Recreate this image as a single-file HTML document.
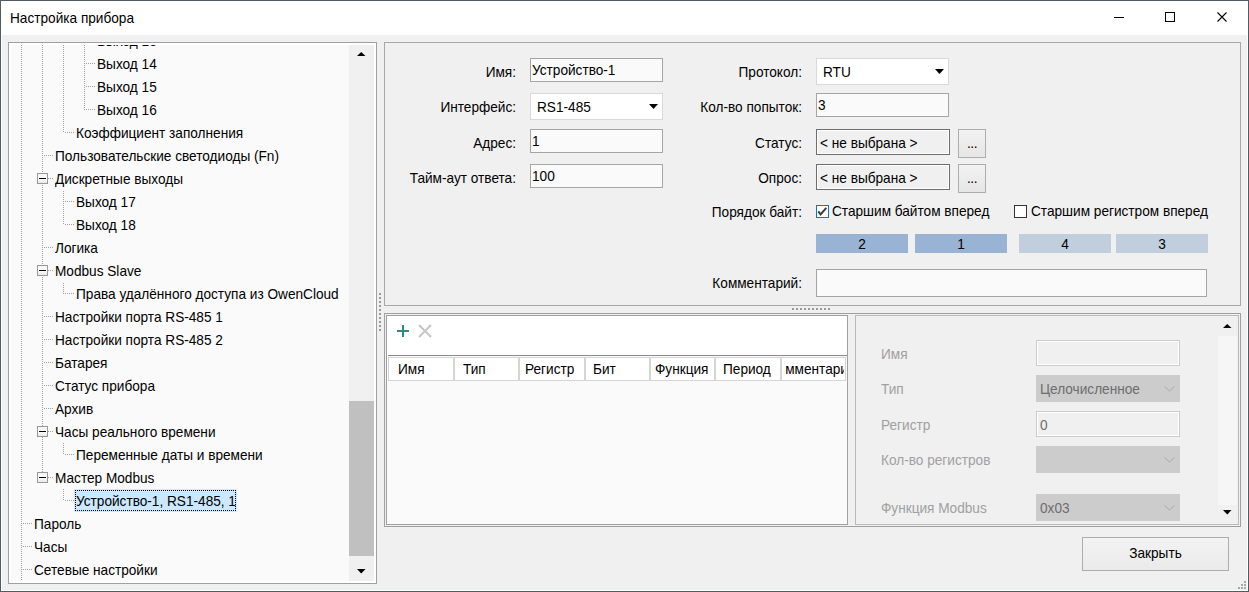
<!DOCTYPE html>
<html><head><meta charset="utf-8"><style>
html,body{margin:0;padding:0;width:1249px;height:592px;overflow:hidden;background:#f0f0f0}
body div{position:absolute}
.t{transform:scaleX(0.94);font-family:"Liberation Sans",sans-serif;font-size:14.5px;line-height:16px;white-space:nowrap;color:#000}
</style></head><body>
<div style="left:0px;top:0px;width:1249px;height:592px;background:#525a64"></div>
<div style="left:1px;top:1px;width:1247px;height:590px;background:#ffffff"></div>
<div style="left:2px;top:35px;width:1245px;height:555px;background:#f0f0f0"></div>
<div class="t" style="left:10px;top:10px;color:#000;font-size:14.5px;transform-origin:0 0;">Настройка прибора</div>
<div style="left:1114px;top:17px;width:10px;height:1px;background:#000"></div>
<div style="left:1165px;top:12px;width:10px;height:10px;box-sizing:border-box;border:1px solid #000;background:transparent;"></div>
<svg style="position:absolute;left:1216px;top:11px" width="13" height="13"><path d="M1.5 1.5 L10.5 10.5 M10.5 1.5 L1.5 10.5" stroke="#000" stroke-width="1.1"/></svg>
<div style="left:8px;top:42px;width:369px;height:542px;box-sizing:border-box;border:1px solid #a0a0a0;background:#ffffff;"></div>
<div style="left:11px;top:45px;width:338px;height:536px;background:#fafafa"></div>
<div style="left:11px;top:45px;width:338px;height:536px;overflow:hidden">
<div style="left:10px;top:-16px;width:1px;height:552px;background:repeating-linear-gradient(to bottom,#a0a0a0 0 1px,transparent 1px 2px)"></div>
<div style="left:31px;top:-16px;width:1px;height:449px;background:repeating-linear-gradient(to bottom,#a0a0a0 0 1px,transparent 1px 2px)"></div>
<div style="left:73px;top:-16px;width:1px;height:81px;background:repeating-linear-gradient(to bottom,#a0a0a0 0 1px,transparent 1px 2px)"></div>
<div style="left:52px;top:-16px;width:1px;height:104px;background:repeating-linear-gradient(to bottom,#a0a0a0 0 1px,transparent 1px 2px)"></div>
<div style="left:52px;top:146px;width:1px;height:34px;background:repeating-linear-gradient(to bottom,#a0a0a0 0 1px,transparent 1px 2px)"></div>
<div style="left:52px;top:238px;width:1px;height:11px;background:repeating-linear-gradient(to bottom,#a0a0a0 0 1px,transparent 1px 2px)"></div>
<div style="left:52px;top:398px;width:1px;height:12px;background:repeating-linear-gradient(to bottom,#a0a0a0 0 1px,transparent 1px 2px)"></div>
<div style="left:52px;top:444px;width:1px;height:12px;background:repeating-linear-gradient(to bottom,#a0a0a0 0 1px,transparent 1px 2px)"></div>
<div style="left:75px;top:-5px;width:10px;height:1px;background:repeating-linear-gradient(to right,#a0a0a0 0 1px,transparent 1px 2px)"></div>
<div class="t" style="left:86px;top:-12px;color:#000;font-size:14.5px;transform-origin:0 0;">Выход 13</div>
<div style="left:75px;top:18px;width:10px;height:1px;background:repeating-linear-gradient(to right,#a0a0a0 0 1px,transparent 1px 2px)"></div>
<div class="t" style="left:86px;top:11px;color:#000;font-size:14.5px;transform-origin:0 0;">Выход 14</div>
<div style="left:75px;top:41px;width:10px;height:1px;background:repeating-linear-gradient(to right,#a0a0a0 0 1px,transparent 1px 2px)"></div>
<div class="t" style="left:86px;top:34px;color:#000;font-size:14.5px;transform-origin:0 0;">Выход 15</div>
<div style="left:75px;top:64px;width:10px;height:1px;background:repeating-linear-gradient(to right,#a0a0a0 0 1px,transparent 1px 2px)"></div>
<div class="t" style="left:86px;top:57px;color:#000;font-size:14.5px;transform-origin:0 0;">Выход 16</div>
<div style="left:54px;top:87px;width:10px;height:1px;background:repeating-linear-gradient(to right,#a0a0a0 0 1px,transparent 1px 2px)"></div>
<div class="t" style="left:65px;top:80px;color:#000;font-size:14.5px;transform-origin:0 0;">Коэффициент заполнения</div>
<div style="left:33px;top:110px;width:10px;height:1px;background:repeating-linear-gradient(to right,#a0a0a0 0 1px,transparent 1px 2px)"></div>
<div class="t" style="left:44px;top:103px;color:#000;font-size:14.5px;transform-origin:0 0;">Пользовательские светодиоды (Fn)</div>
<div style="left:33px;top:133px;width:10px;height:1px;background:repeating-linear-gradient(to right,#a0a0a0 0 1px,transparent 1px 2px)"></div>
<div style="left:26px;top:128px;width:11px;height:11px;box-sizing:border-box;border:1px solid #999999;background:linear-gradient(#f4f4f4,#ffffff 50%,#e8e8e8);"></div>
<div style="left:28px;top:133px;width:7px;height:1px;background:#000"></div>
<div class="t" style="left:44px;top:126px;color:#000;font-size:14.5px;transform-origin:0 0;">Дискретные выходы</div>
<div style="left:54px;top:156px;width:10px;height:1px;background:repeating-linear-gradient(to right,#a0a0a0 0 1px,transparent 1px 2px)"></div>
<div class="t" style="left:65px;top:149px;color:#000;font-size:14.5px;transform-origin:0 0;">Выход 17</div>
<div style="left:54px;top:179px;width:10px;height:1px;background:repeating-linear-gradient(to right,#a0a0a0 0 1px,transparent 1px 2px)"></div>
<div class="t" style="left:65px;top:172px;color:#000;font-size:14.5px;transform-origin:0 0;">Выход 18</div>
<div style="left:33px;top:202px;width:10px;height:1px;background:repeating-linear-gradient(to right,#a0a0a0 0 1px,transparent 1px 2px)"></div>
<div class="t" style="left:44px;top:195px;color:#000;font-size:14.5px;transform-origin:0 0;">Логика</div>
<div style="left:33px;top:225px;width:10px;height:1px;background:repeating-linear-gradient(to right,#a0a0a0 0 1px,transparent 1px 2px)"></div>
<div style="left:26px;top:220px;width:11px;height:11px;box-sizing:border-box;border:1px solid #999999;background:linear-gradient(#f4f4f4,#ffffff 50%,#e8e8e8);"></div>
<div style="left:28px;top:225px;width:7px;height:1px;background:#000"></div>
<div class="t" style="left:44px;top:218px;color:#000;font-size:14.5px;transform-origin:0 0;">Modbus Slave</div>
<div style="left:54px;top:248px;width:10px;height:1px;background:repeating-linear-gradient(to right,#a0a0a0 0 1px,transparent 1px 2px)"></div>
<div class="t" style="left:65px;top:241px;color:#000;font-size:14.5px;transform-origin:0 0;">Права удалённого доступа из OwenCloud</div>
<div style="left:33px;top:271px;width:10px;height:1px;background:repeating-linear-gradient(to right,#a0a0a0 0 1px,transparent 1px 2px)"></div>
<div class="t" style="left:44px;top:264px;color:#000;font-size:14.5px;transform-origin:0 0;">Настройки порта RS-485 1</div>
<div style="left:33px;top:294px;width:10px;height:1px;background:repeating-linear-gradient(to right,#a0a0a0 0 1px,transparent 1px 2px)"></div>
<div class="t" style="left:44px;top:287px;color:#000;font-size:14.5px;transform-origin:0 0;">Настройки порта RS-485 2</div>
<div style="left:33px;top:317px;width:10px;height:1px;background:repeating-linear-gradient(to right,#a0a0a0 0 1px,transparent 1px 2px)"></div>
<div class="t" style="left:44px;top:310px;color:#000;font-size:14.5px;transform-origin:0 0;">Батарея</div>
<div style="left:33px;top:340px;width:10px;height:1px;background:repeating-linear-gradient(to right,#a0a0a0 0 1px,transparent 1px 2px)"></div>
<div class="t" style="left:44px;top:333px;color:#000;font-size:14.5px;transform-origin:0 0;">Статус прибора</div>
<div style="left:33px;top:363px;width:10px;height:1px;background:repeating-linear-gradient(to right,#a0a0a0 0 1px,transparent 1px 2px)"></div>
<div class="t" style="left:44px;top:356px;color:#000;font-size:14.5px;transform-origin:0 0;">Архив</div>
<div style="left:33px;top:386px;width:10px;height:1px;background:repeating-linear-gradient(to right,#a0a0a0 0 1px,transparent 1px 2px)"></div>
<div style="left:26px;top:381px;width:11px;height:11px;box-sizing:border-box;border:1px solid #999999;background:linear-gradient(#f4f4f4,#ffffff 50%,#e8e8e8);"></div>
<div style="left:28px;top:386px;width:7px;height:1px;background:#000"></div>
<div class="t" style="left:44px;top:379px;color:#000;font-size:14.5px;transform-origin:0 0;">Часы реального времени</div>
<div style="left:54px;top:409px;width:10px;height:1px;background:repeating-linear-gradient(to right,#a0a0a0 0 1px,transparent 1px 2px)"></div>
<div class="t" style="left:65px;top:402px;color:#000;font-size:14.5px;transform-origin:0 0;">Переменные даты и времени</div>
<div style="left:33px;top:432px;width:10px;height:1px;background:repeating-linear-gradient(to right,#a0a0a0 0 1px,transparent 1px 2px)"></div>
<div style="left:26px;top:427px;width:11px;height:11px;box-sizing:border-box;border:1px solid #999999;background:linear-gradient(#f4f4f4,#ffffff 50%,#e8e8e8);"></div>
<div style="left:28px;top:432px;width:7px;height:1px;background:#000"></div>
<div class="t" style="left:44px;top:425px;color:#000;font-size:14.5px;transform-origin:0 0;">Мастер Modbus</div>
<div style="left:54px;top:455px;width:10px;height:1px;background:repeating-linear-gradient(to right,#a0a0a0 0 1px,transparent 1px 2px)"></div>
<div style="left:63px;top:444px;width:163px;height:23px;background:#cce8ff"></div>
<div style="left:64px;top:445px;width:161px;height:1px;background:repeating-linear-gradient(to right,#000 0 1px,transparent 1px 2px)"></div>
<div style="left:64px;top:465px;width:161px;height:1px;background:repeating-linear-gradient(to right,#000 0 1px,transparent 1px 2px)"></div>
<div style="left:64px;top:445px;width:1px;height:21px;background:repeating-linear-gradient(to bottom,#000 0 1px,transparent 1px 2px)"></div>
<div style="left:224px;top:445px;width:1px;height:21px;background:repeating-linear-gradient(to bottom,#000 0 1px,transparent 1px 2px)"></div>
<div class="t" style="left:65px;top:448px;color:#000;font-size:14.5px;transform-origin:0 0;">Устройство-1, RS1-485, 1</div>
<div style="left:12px;top:478px;width:10px;height:1px;background:repeating-linear-gradient(to right,#a0a0a0 0 1px,transparent 1px 2px)"></div>
<div class="t" style="left:23px;top:471px;color:#000;font-size:14.5px;transform-origin:0 0;">Пароль</div>
<div style="left:12px;top:501px;width:10px;height:1px;background:repeating-linear-gradient(to right,#a0a0a0 0 1px,transparent 1px 2px)"></div>
<div class="t" style="left:23px;top:494px;color:#000;font-size:14.5px;transform-origin:0 0;">Часы</div>
<div style="left:12px;top:524px;width:10px;height:1px;background:repeating-linear-gradient(to right,#a0a0a0 0 1px,transparent 1px 2px)"></div>
<div class="t" style="left:23px;top:517px;color:#000;font-size:14.5px;transform-origin:0 0;">Сетевые настройки</div>
</div>
<div style="left:349px;top:45px;width:25px;height:536px;background:#f0f0f0"></div>
<div style="left:349px;top:401px;width:25px;height:155px;background:#c0c0c0"></div>
<svg style="position:absolute;left:357px;top:52px" width="8.5" height="4"><path d="M0 4 L4.25 0 L8.5 4 Z" fill="#000"/></svg>
<svg style="position:absolute;left:357px;top:569px" width="8.5" height="4.5"><path d="M0 0 L4.25 4.5 L8.5 0 Z" fill="#000"/></svg>
<div style="left:384px;top:42px;width:857px;height:264px;box-sizing:border-box;border:1px solid #a8a8a8;background:#f0f0f0;"></div>
<div class="t" style="left:116px;width:400px;top:64px;color:#000;text-align:right;font-size:14.5px;transform-origin:100% 0;">Имя:</div>
<div style="left:530px;top:58px;width:133px;height:24px;box-sizing:border-box;border:1px solid #a5a5a5;background:#fafafa;"></div>
<div class="t" style="left:532px;top:62px;color:#000;font-size:14.5px;transform-origin:0 0;">Устройство-1</div>
<div class="t" style="left:116px;width:400px;top:99px;color:#000;text-align:right;font-size:14.5px;transform-origin:100% 0;">Интерфейс:</div>
<div style="left:530px;top:93px;width:133px;height:27px;box-sizing:border-box;border:1px solid #d9d9d9;background:#ffffff;"></div>
<div class="t" style="left:537px;top:99px;color:#000;font-size:14.5px;transform-origin:0 0;">RS1-485</div>
<svg style="position:absolute;left:649px;top:104px" width="9" height="5"><path d="M0 0 L4.5 5 L9 0 Z" fill="#000"/></svg>
<div class="t" style="left:116px;width:400px;top:135px;color:#000;text-align:right;font-size:14.5px;transform-origin:100% 0;">Адрес:</div>
<div style="left:530px;top:129px;width:133px;height:24px;box-sizing:border-box;border:1px solid #a5a5a5;background:#fafafa;"></div>
<div class="t" style="left:532px;top:133px;color:#000;font-size:14.5px;transform-origin:0 0;">1</div>
<div class="t" style="left:116px;width:400px;top:170px;color:#000;text-align:right;font-size:14.5px;transform-origin:100% 0;">Тайм-аут ответа:</div>
<div style="left:530px;top:164px;width:133px;height:24px;box-sizing:border-box;border:1px solid #a5a5a5;background:#fafafa;"></div>
<div class="t" style="left:532px;top:168px;color:#000;font-size:14.5px;transform-origin:0 0;">100</div>
<div class="t" style="left:402px;width:400px;top:64px;color:#000;text-align:right;font-size:14.5px;transform-origin:100% 0;">Протокол:</div>
<div style="left:816px;top:58px;width:133px;height:27px;box-sizing:border-box;border:1px solid #d9d9d9;background:#ffffff;"></div>
<div class="t" style="left:823px;top:64px;color:#000;font-size:14.5px;transform-origin:0 0;">RTU</div>
<svg style="position:absolute;left:935px;top:69px" width="9" height="5"><path d="M0 0 L4.5 5 L9 0 Z" fill="#000"/></svg>
<div class="t" style="left:402px;width:400px;top:99px;color:#000;text-align:right;font-size:14.5px;transform-origin:100% 0;">Кол-во попыток:</div>
<div style="left:816px;top:93px;width:133px;height:24px;box-sizing:border-box;border:1px solid #a5a5a5;background:#fafafa;"></div>
<div class="t" style="left:818px;top:97px;color:#000;font-size:14.5px;transform-origin:0 0;">3</div>
<div class="t" style="left:402px;width:400px;top:135px;color:#000;text-align:right;font-size:14.5px;transform-origin:100% 0;">Статус:</div>
<div style="left:816px;top:129px;width:134px;height:26px;box-sizing:border-box;border:1px solid #6e6e6e;background:#f0f0f0;box-shadow:inset 0 0 0 1px #ffffff"></div>
<div class="t" style="left:820px;top:135px;color:#000;font-size:14.5px;transform-origin:0 0;">&lt; не выбрана &gt;</div>
<div style="left:958px;top:129px;width:28px;height:29px;box-sizing:border-box;border:1px solid #adadad;background:linear-gradient(#f2f2f2,#e6e6e6);"></div>
<div class="t" style="left:958px;width:28px;top:135px;color:#000;text-align:center;font-size:14.5px;transform-origin:50% 0;letter-spacing:-0.5px">...</div>
<div class="t" style="left:402px;width:400px;top:170px;color:#000;text-align:right;font-size:14.5px;transform-origin:100% 0;">Опрос:</div>
<div style="left:816px;top:164px;width:134px;height:26px;box-sizing:border-box;border:1px solid #6e6e6e;background:#f0f0f0;box-shadow:inset 0 0 0 1px #ffffff"></div>
<div class="t" style="left:820px;top:170px;color:#000;font-size:14.5px;transform-origin:0 0;">&lt; не выбрана &gt;</div>
<div style="left:958px;top:164px;width:28px;height:29px;box-sizing:border-box;border:1px solid #adadad;background:linear-gradient(#f2f2f2,#e6e6e6);"></div>
<div class="t" style="left:958px;width:28px;top:170px;color:#000;text-align:center;font-size:14.5px;transform-origin:50% 0;letter-spacing:-0.5px">...</div>
<div class="t" style="left:402px;width:400px;top:204px;color:#000;text-align:right;font-size:14.5px;transform-origin:100% 0;">Порядок байт:</div>
<div style="left:816px;top:205px;width:13px;height:13px;box-sizing:border-box;border:1px solid #0078d7;background:#ffffff;"></div>
<svg style="position:absolute;left:816px;top:205px" width="13" height="13"><path d="M2.3 6.3 L4.6 9.3 L10.3 2.8" stroke="#3a3a3a" stroke-width="2" fill="none"/></svg>
<div class="t" style="left:832px;top:203px;color:#000;font-size:14.5px;transform-origin:0 0;">Старшим байтом вперед</div>
<div style="left:1014px;top:205px;width:13px;height:13px;box-sizing:border-box;border:1px solid #333333;background:#ffffff;"></div>
<div class="t" style="left:1031px;top:203px;color:#000;font-size:14.5px;transform-origin:0 0;">Старшим регистром вперед</div>
<div style="left:816px;top:234px;width:92px;height:19px;background:#98b3d3"></div>
<div class="t" style="left:816px;width:92px;top:236px;color:#000;text-align:center;font-size:14.5px;transform-origin:50% 0;">2</div>
<div style="left:915px;top:234px;width:92px;height:19px;background:#98b3d3"></div>
<div class="t" style="left:915px;width:92px;top:236px;color:#000;text-align:center;font-size:14.5px;transform-origin:50% 0;">1</div>
<div style="left:1019px;top:234px;width:92px;height:19px;background:#c0cedd"></div>
<div class="t" style="left:1019px;width:92px;top:236px;color:#000;text-align:center;font-size:14.5px;transform-origin:50% 0;">4</div>
<div style="left:1116px;top:234px;width:92px;height:19px;background:#c0cedd"></div>
<div class="t" style="left:1116px;width:92px;top:236px;color:#000;text-align:center;font-size:14.5px;transform-origin:50% 0;">3</div>
<div class="t" style="left:402px;width:400px;top:275px;color:#000;text-align:right;font-size:14.5px;transform-origin:100% 0;">Комментарий:</div>
<div style="left:816px;top:269px;width:391px;height:28px;box-sizing:border-box;border:1px solid #a5a5a5;background:#fafafa;"></div>
<div style="left:792px;top:308px;width:2px;height:2px;background:#999"></div>
<div style="left:379px;top:293px;width:2px;height:2px;background:#999"></div>
<div style="left:850px;top:401px;width:2px;height:2px;background:#999"></div>
<div style="left:796px;top:308px;width:2px;height:2px;background:#999"></div>
<div style="left:379px;top:297px;width:2px;height:2px;background:#999"></div>
<div style="left:850px;top:405px;width:2px;height:2px;background:#999"></div>
<div style="left:800px;top:308px;width:2px;height:2px;background:#999"></div>
<div style="left:379px;top:301px;width:2px;height:2px;background:#999"></div>
<div style="left:850px;top:409px;width:2px;height:2px;background:#999"></div>
<div style="left:804px;top:308px;width:2px;height:2px;background:#999"></div>
<div style="left:379px;top:305px;width:2px;height:2px;background:#999"></div>
<div style="left:850px;top:413px;width:2px;height:2px;background:#999"></div>
<div style="left:808px;top:308px;width:2px;height:2px;background:#999"></div>
<div style="left:379px;top:309px;width:2px;height:2px;background:#999"></div>
<div style="left:850px;top:417px;width:2px;height:2px;background:#999"></div>
<div style="left:812px;top:308px;width:2px;height:2px;background:#999"></div>
<div style="left:379px;top:313px;width:2px;height:2px;background:#999"></div>
<div style="left:850px;top:421px;width:2px;height:2px;background:#999"></div>
<div style="left:816px;top:308px;width:2px;height:2px;background:#999"></div>
<div style="left:379px;top:317px;width:2px;height:2px;background:#999"></div>
<div style="left:850px;top:425px;width:2px;height:2px;background:#999"></div>
<div style="left:820px;top:308px;width:2px;height:2px;background:#999"></div>
<div style="left:379px;top:321px;width:2px;height:2px;background:#999"></div>
<div style="left:850px;top:429px;width:2px;height:2px;background:#999"></div>
<div style="left:824px;top:308px;width:2px;height:2px;background:#999"></div>
<div style="left:379px;top:325px;width:2px;height:2px;background:#999"></div>
<div style="left:850px;top:433px;width:2px;height:2px;background:#999"></div>
<div style="left:828px;top:308px;width:2px;height:2px;background:#999"></div>
<div style="left:379px;top:329px;width:2px;height:2px;background:#999"></div>
<div style="left:850px;top:437px;width:2px;height:2px;background:#999"></div>
<div style="left:384px;top:313px;width:857px;height:214px;box-sizing:border-box;border:1px solid #a0a0a0;background:#f0f0f0;"></div>
<div style="left:386px;top:315px;width:462px;height:210px;box-sizing:border-box;border:1px solid #a0a0a0;background:#fafafa;"></div>
<div style="left:387px;top:316px;width:460px;height:40px;background:#ffffff"></div>
<div style="left:388px;top:355px;width:459px;height:1px;background:#8a8a8a"></div>
<svg style="position:absolute;left:397px;top:325px" width="12" height="12"><path d="M6 0 V12 M0 6 H12" stroke="#2e8b82" stroke-width="2"/></svg>
<svg style="position:absolute;left:417px;top:323px" width="16" height="16"><path d="M2 2 L14 14 M14 2 L2 14" stroke="#c6c6c6" stroke-width="2"/></svg>
<div style="left:388px;top:357px;width:458px;height:24px;background:#ffffff"></div>
<div style="left:388px;top:357px;width:458px;height:1px;background:#d5d5d5"></div>
<div style="left:388px;top:380px;width:458px;height:1px;background:#d5d5d5"></div>
<div style="left:388px;top:357px;width:1px;height:24px;background:#d5d5d5"></div>
<div style="left:453px;top:357px;width:2px;height:24px;background:#d5d5d5"></div>
<div style="left:518px;top:357px;width:2px;height:24px;background:#d5d5d5"></div>
<div style="left:584px;top:357px;width:2px;height:24px;background:#d5d5d5"></div>
<div style="left:649px;top:357px;width:2px;height:24px;background:#d5d5d5"></div>
<div style="left:714px;top:357px;width:2px;height:24px;background:#d5d5d5"></div>
<div style="left:780px;top:357px;width:2px;height:24px;background:#d5d5d5"></div>
<div style="left:845px;top:357px;width:1px;height:24px;background:#d5d5d5"></div>
<div class="t" style="left:398px;top:361px;color:#000;font-size:14.5px;transform-origin:0 0;">Имя</div>
<div class="t" style="left:463px;top:361px;color:#000;font-size:14.5px;transform-origin:0 0;">Тип</div>
<div class="t" style="left:525px;top:361px;color:#000;font-size:14.5px;transform-origin:0 0;">Регистр</div>
<div class="t" style="left:593px;top:361px;color:#000;font-size:14.5px;transform-origin:0 0;">Бит</div>
<div class="t" style="left:655px;top:361px;color:#000;font-size:14.5px;transform-origin:0 0;">Функция</div>
<div class="t" style="left:723px;top:361px;color:#000;font-size:14.5px;transform-origin:0 0;">Период</div>
<div style="left:782px;top:358px;width:62px;height:22px;overflow:hidden"><div class="t" style="left:1px;top:3px">мментарий</div></div>
<div style="left:855px;top:315px;width:384px;height:210px;box-sizing:border-box;border:1px solid #bababa;background:#f0f0f0;"></div>
<div class="t" style="left:881px;top:346px;color:#a0a0a0;font-size:14.5px;transform-origin:0 0;">Имя</div>
<div style="left:1036px;top:340px;width:144px;height:26px;box-sizing:border-box;border:1px solid #cccccc;background:#f0f0f0;box-shadow:inset 0 0 0 1px #ffffff"></div>
<div class="t" style="left:881px;top:381px;color:#a0a0a0;font-size:14.5px;transform-origin:0 0;">Тип</div>
<div style="left:1036px;top:375px;width:144px;height:27px;box-sizing:border-box;border:1px solid #cccccc;background:#cccccc;"></div>
<div class="t" style="left:1040px;top:381px;color:#6d6d6d;font-size:14.5px;transform-origin:0 0;">Целочисленное</div>
<svg style="position:absolute;left:1164px;top:386px" width="11" height="6"><path d="M0.5 0.5 L5.5 5 L10.5 0.5" stroke="#a8a8a8" fill="none"/></svg>
<div class="t" style="left:881px;top:417px;color:#a0a0a0;font-size:14.5px;transform-origin:0 0;">Регистр</div>
<div style="left:1036px;top:411px;width:144px;height:26px;box-sizing:border-box;border:1px solid #cccccc;background:#f0f0f0;box-shadow:inset 0 0 0 1px #ffffff"></div>
<div class="t" style="left:1040px;top:417px;color:#6d6d6d;font-size:14.5px;transform-origin:0 0;">0</div>
<div class="t" style="left:881px;top:452px;color:#a0a0a0;font-size:14.5px;transform-origin:0 0;">Кол-во регистров</div>
<div style="left:1036px;top:446px;width:144px;height:27px;box-sizing:border-box;border:1px solid #cccccc;background:#cccccc;"></div>
<svg style="position:absolute;left:1164px;top:457px" width="11" height="6"><path d="M0.5 0.5 L5.5 5 L10.5 0.5" stroke="#a8a8a8" fill="none"/></svg>
<div class="t" style="left:881px;top:500px;color:#a0a0a0;font-size:14.5px;transform-origin:0 0;">Функция Modbus</div>
<div style="left:1036px;top:494px;width:144px;height:27px;box-sizing:border-box;border:1px solid #cccccc;background:#cccccc;"></div>
<div class="t" style="left:1040px;top:500px;color:#6d6d6d;font-size:14.5px;transform-origin:0 0;">0x03</div>
<svg style="position:absolute;left:1164px;top:505px" width="11" height="6"><path d="M0.5 0.5 L5.5 5 L10.5 0.5" stroke="#a8a8a8" fill="none"/></svg>
<div style="left:1218px;top:336px;width:19px;height:169px;background:#f6f6f6"></div>
<svg style="position:absolute;left:1223px;top:324px" width="8.5" height="4"><path d="M0 4 L4.25 0 L8.5 4 Z" fill="#000"/></svg>
<svg style="position:absolute;left:1223px;top:510px" width="8.5" height="4.5"><path d="M0 0 L4.25 4.5 L8.5 0 Z" fill="#000"/></svg>
<div style="left:1082px;top:537px;width:147px;height:34px;box-sizing:border-box;border:1px solid #adadad;background:linear-gradient(#f3f3f3,#eaeaea);"></div>
<div class="t" style="left:1082px;width:147px;top:545px;color:#000;text-align:center;font-size:14.5px;transform-origin:50% 0;">Закрыть</div>
<div style="left:1244px;top:581px;width:2px;height:2px;background:#a8a8a8"></div>
<div style="left:1241px;top:584px;width:2px;height:2px;background:#a8a8a8"></div>
<div style="left:1244px;top:584px;width:2px;height:2px;background:#a8a8a8"></div>
<div style="left:1238px;top:587px;width:2px;height:2px;background:#a8a8a8"></div>
<div style="left:1241px;top:587px;width:2px;height:2px;background:#a8a8a8"></div>
<div style="left:1244px;top:587px;width:2px;height:2px;background:#a8a8a8"></div>
</body></html>
